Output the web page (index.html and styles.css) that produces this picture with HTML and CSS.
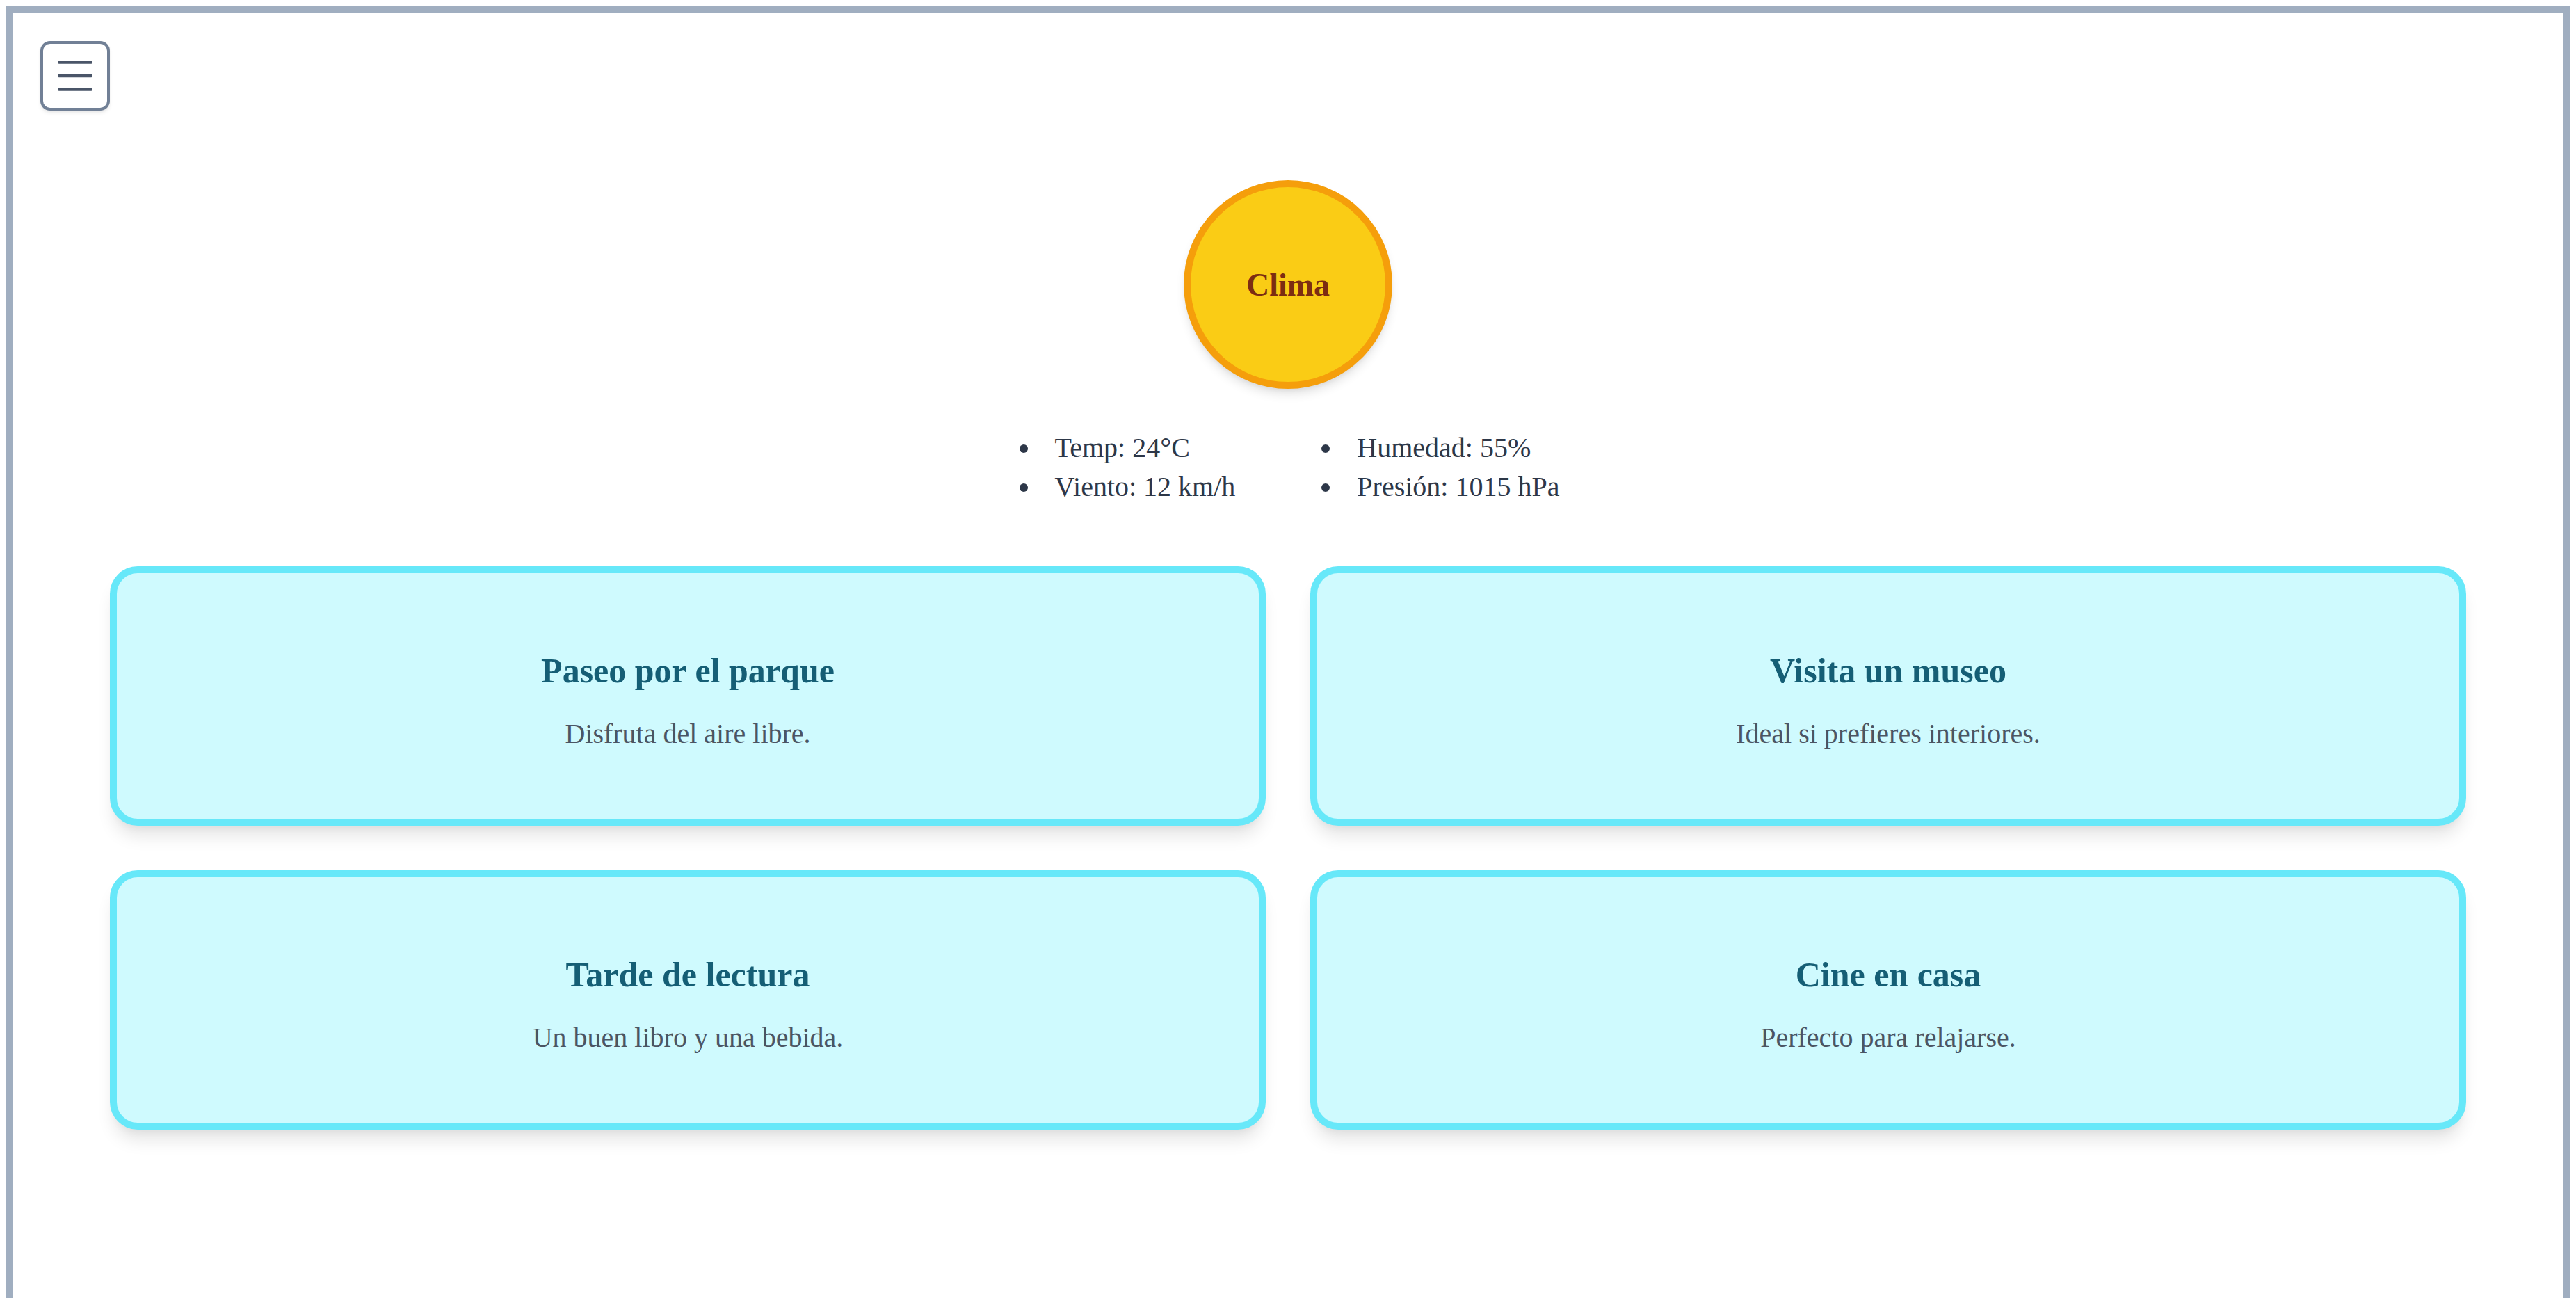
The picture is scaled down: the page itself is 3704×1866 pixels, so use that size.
FILE: index.html
```html
<!DOCTYPE html>
<html lang="es">
<head>
<meta charset="utf-8">
<title>Clima</title>
<link rel="stylesheet" href="styles.css">
</head>
<body>
<div class="frame">
  <header class="topbar">
    <button class="menu-btn" aria-label="Menú">
      <svg width="50" height="44" viewBox="0 0 50 44">
        <line x1="2" y1="2.5" x2="48" y2="2.5"/>
        <line x1="2" y1="22" x2="48" y2="22"/>
        <line x1="2" y1="41.5" x2="48" y2="41.5"/>
      </svg>
    </button>
  </header>
  <main class="main">
    <div class="sun">Clima</div>
    <div class="stats">
      <ul class="stat-list">
        <li>Temp: 24°C</li>
        <li>Viento: 12 km/h</li>
      </ul>
      <ul class="stat-list">
        <li>Humedad: 55%</li>
        <li>Presión: 1015 hPa</li>
      </ul>
    </div>
    <section class="cards">
      <article class="card">
        <h3 class="card-title">Paseo por el parque</h3>
        <p class="card-text">Disfruta del aire libre.</p>
      </article>
      <article class="card">
        <h3 class="card-title">Visita un museo</h3>
        <p class="card-text">Ideal si prefieres interiores.</p>
      </article>
      <article class="card">
        <h3 class="card-title">Tarde de lectura</h3>
        <p class="card-text">Un buen libro y una bebida.</p>
      </article>
      <article class="card">
        <h3 class="card-title">Cine en casa</h3>
        <p class="card-text">Perfecto para relajarse.</p>
      </article>
    </section>
  </main>
</div>
</body>
</html>
```

FILE: styles.css
```css
html, body {
  background: #ffffff;
}
body {
  margin: 8px;
  font-family: "Liberation Serif", "Times New Roman", serif;
  color: #2d3748;
}
.frame {
  border: 10px solid #a0aec0;
  padding: 40px;
  min-height: 100vh;
}
.topbar {
  display: flex;
}
.menu-btn {
  width: 100px;
  height: 100px;
  box-sizing: border-box;
  border: 4px solid #718096;
  border-radius: 14px;
  background: #ffffff;
  box-shadow: 0 4px 6px -1px rgba(0,0,0,0.08), 0 2px 4px -1px rgba(0,0,0,0.05);
  display: flex;
  align-items: center;
  justify-content: center;
  padding: 0;
  margin-top: 1px;
}
.menu-btn svg line {
  stroke: #4a5568;
  stroke-width: 4.5;
  stroke-linecap: round;
}
.main {
  display: flex;
  flex-direction: column;
  align-items: center;
}
.sun {
  margin-top: 100px;
  width: 300px;
  height: 300px;
  box-sizing: border-box;
  border-radius: 50%;
  background: #facc15;
  border: 10px solid #f59e0b;
  box-shadow: 0 10px 15px -3px rgba(0,0,0,0.12), 0 4px 6px -2px rgba(0,0,0,0.06);
  display: flex;
  align-items: center;
  justify-content: center;
  font-weight: bold;
  font-size: 46px;
  color: #7c2d12;
}
.stats {
  margin-top: 57px;
  display: flex;
  gap: 109px;
  padding-right: 11px;
}
.stat-list {
  margin: 0;
  padding-left: 46px;
  font-size: 40px;
  line-height: 56px;
  color: #2d3748;
}
.stat-list li {
  padding-left: 20px;
}
.cards {
  align-self: stretch;
  margin: 86px 100px 0;
  display: grid;
  grid-template-columns: 1fr 1fr;
  gap: 64px;
}
.card {
  background: #cffafe;
  border: 10px solid #67e8f9;
  border-radius: 40px;
  padding: 110px 40px 92px;
  text-align: center;
  box-shadow: 0 20px 25px -5px rgba(0,0,0,0.1), 0 10px 10px -5px rgba(0,0,0,0.04);
}
.card-title {
  margin: 0;
  font-size: 50px;
  line-height: 60px;
  font-weight: bold;
  color: #155e75;
}
.card-text {
  margin: 31px 0 0;
  font-size: 40px;
  line-height: 60px;
  color: #4b5563;
}
```
